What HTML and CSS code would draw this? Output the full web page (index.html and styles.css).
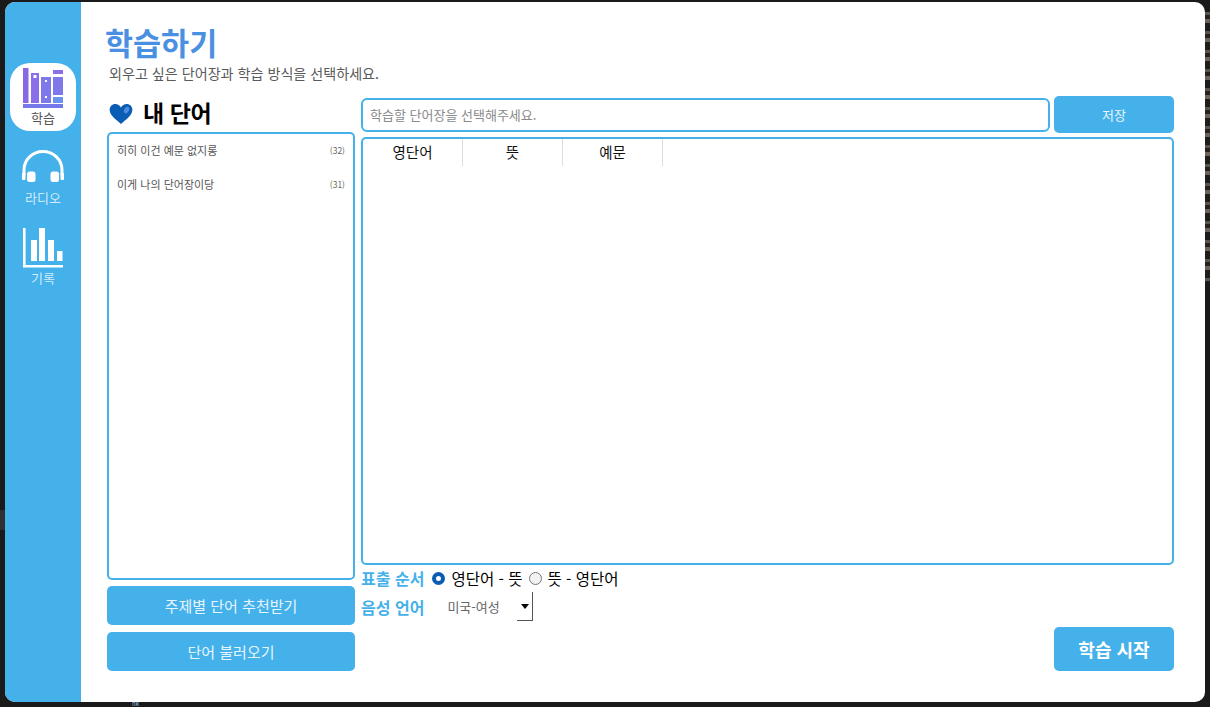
FILE: index.html
```html
<!DOCTYPE html>
<html lang="ko">
<head>
<meta charset="utf-8">
<title>학습하기</title>
<link rel="stylesheet" href="styles.css">
</head>
<body>
<div class="backdrop">
  <div class="noise-right"></div>
  <div class="band-left"></div>
  <span class="behind-text">nk</span>
</div>
<div class="window">
  <nav class="sidebar">
    <a class="nav-item active">
      <svg class="nav-icon tall" width="40" height="40" viewBox="0 0 40 40">
        <rect x="0" y="0" width="5.500" height="35" fill="#8a68e4"/>
        <path fill-rule="evenodd" fill="#8a6eea" d="M8 5h8v30H8zM10.500 7v3h3V7z"/>
        <path fill-rule="evenodd" fill="#7f78ea" d="M18 9h10v26H18zM22 12v2h2v-2zM22 28v2h2v-2z"/>
        <rect x="30" y="2" width="10" height="4" fill="#8a6eea"/>
        <rect x="30" y="9" width="10" height="18" fill="#7f78ea"/>
        <rect x="30" y="29" width="10" height="6" fill="#6c92ee"/>
        <rect x="0" y="36" width="40" height="4" fill="#7478e8"/>
      </svg>
      <span>학습</span>
    </a>
    <a class="nav-item">
      <svg class="nav-icon short" width="42" height="32" viewBox="0 0 42 32">
        <path d="M2 25V20a19 18.500 0 0 1 38 0v5" fill="none" stroke="#fff" stroke-width="3"/>
        <rect x="5" y="21.500" width="8.500" height="10.500" rx="2.500" fill="#fff"/>
        <rect x="28.500" y="21.500" width="8.500" height="10.500" rx="2.500" fill="#fff"/>
        <rect x="0" y="23" width="3.500" height="7" rx="1" fill="#fff"/>
        <rect x="38.500" y="23" width="3.500" height="7" rx="1" fill="#fff"/>
      </svg>
      <span>라디오</span>
    </a>
    <a class="nav-item">
      <svg class="nav-icon tall" width="40" height="40" viewBox="0 0 40 40">
        <path d="M1.300 0v38.200H40" fill="none" stroke="#fff" stroke-width="2.600"/>
        <rect x="8" y="12" width="6" height="21" fill="#fff"/>
        <rect x="16" y="0" width="6" height="33" fill="#fff"/>
        <rect x="25" y="12" width="6" height="21" fill="#fff"/>
        <rect x="34" y="23" width="5.500" height="10" fill="#fff"/>
      </svg>
      <span>기록</span>
    </a>
  </nav>
  <main class="main">
    <header class="page-head">
      <h1>학습하기</h1>
      <p>외우고 싶은 단어장과 학습 방식을 선택하세요.</p>
    </header>
    <div class="columns">
      <section class="left">
        <h2 class="my-title">
          <svg width="24" height="20" viewBox="0.800 0.800 22.400 19.700">
            <path d="M12 20.500C7 16 .8 12 .8 6.500 .8 3 3.400 .8 6.300 .8c2.500 0 4.500 1.200 5.700 3.400C13.200 2 15.200 .8 17.700 .8c2.900 0 5.500 2.200 5.500 5.700C23.200 12 17 16 12 20.500z" fill="#0b5cb4"/>
            <ellipse cx="17.500" cy="6.800" rx="2.300" ry="3.500" transform="rotate(25 17.500 6.800)" fill="#4f8ce0"/>
          </svg>
          <span>내 단어</span>
        </h2>
        <ul class="list">
          <li><span>히히 이건 예문 없지롱</span><small>(32)</small></li>
          <li><span>이게 나의 단어장이당</span><small>(31)</small></li>
        </ul>
        <button class="btn wide">주제별 단어 추천받기</button>
        <button class="btn wide">단어 불러오기</button>
      </section>
      <section class="right">
        <div class="save-row">
          <input class="name-input" placeholder="학습할 단어장을 선택해주세요.">
          <button class="btn save">저장</button>
        </div>
        <div class="table-box">
          <div class="thead"><div>영단어</div><div>뜻</div><div>예문</div></div>
        </div>
        <div class="option-row">
          <strong>표출 순서</strong>
          <span class="radio on"></span><span class="opt">영단어 - 뜻</span>
          <span class="radio"></span><span class="opt">뜻 - 영단어</span>
        </div>
        <div class="option-row voice">
          <strong>음성 언어</strong>
          <div class="select"><span>미국-여성</span><i class="caret"></i></div>
        </div>
        <div class="start-row"><button class="btn start">학습 시작</button></div>
      </section>
    </div>
  </main>
</div>
</body>
</html>
```
FILE: styles.css
```css
* { box-sizing: border-box; }
html, body { margin: 0; height: 100%; }
body {
  background: #1a1a1a;
  font-family: "Noto Sans CJK KR", "Noto Sans", sans-serif;
  overflow: hidden;
}
.backdrop { position: absolute; inset: 0; overflow: hidden; }
.noise-right {
  position: absolute;
  left: 1205px;
  top: 12px;
  width: 5px;
  height: 270px;
  background: repeating-linear-gradient(180deg, #5a544e 0 3px, #26231f 3px 7px, #6b6259 7px 11px, #1f1d1b 11px 19px);
}
.band-left {
  position: absolute;
  left: 0;
  top: 510px;
  width: 5px;
  height: 20px;
  background: #303030;
}
.behind-text {
  position: absolute;
  left: 132px;
  top: 701px;
  font-size: 6px;
  line-height: 5px;
  color: #a9c4ea;
}
.window {
  position: relative;
  width: 1200px;
  height: 700px;
  margin: 2px 5px;
  display: flex;
  background: #fff;
  border-radius: 10px;
  overflow: hidden;
}
.sidebar {
  width: 76px;
  flex: none;
  background: #45b1ea;
  padding: 61px 5px 0;
  display: flex;
  flex-direction: column;
  align-items: center;
  gap: 14px;
}
.nav-item {
  width: 66px;
  height: 68px;
  border-radius: 20px;
  display: flex;
  flex-direction: column;
  align-items: center;
  padding-top: 5px;
  color: #cfeafa;
  font-size: 13px;
  line-height: 16px;
}
.nav-item:nth-child(2) { height: 64px; }
.nav-item.active { background: #fff; color: #555; }
.nav-icon { display: block; flex: none; }
.nav-icon.tall { margin-bottom: 2px; }
.nav-icon.short { margin-bottom: 8px; }
.main { flex: 1; padding: 19px 31px 0 24px; min-width: 0; }
.page-head h1 {
  margin: 0;
  font-size: 30.500px;
  line-height: 42px;
  font-weight: 700;
  color: #4a90e2;
}
.page-head p {
  margin: 0 0 0 4px;
  font-size: 14.100px;
  line-height: 20px;
  color: #5a5a5a;
}
.columns { display: flex; gap: 6px; margin-top: 13px; padding-left: 2px; }
.left { width: 248px; flex: none; display: flex; flex-direction: column; }
.my-title {
  margin: 0;
  height: 36px;
  display: flex;
  align-items: center;
  gap: 9px;
  padding: 0 0 5px 2px;
  font-size: 23px;
  letter-spacing: -0.400px;
  font-weight: 700;
  color: #000;
}
.my-title svg { position: relative; top: 2px; }
.my-title span { margin-left: 1px; }
.list {
  list-style: none;
  margin: 0 0 6px;
  padding: 0;
  height: 448px;
  border: 2px solid #45b1ea;
  border-radius: 5px;
}
.list li {
  height: 34px;
  display: flex;
  justify-content: space-between;
  align-items: center;
  padding: 0 8px 2px 8px;
  font-size: 11px;
  color: #555;
}
.list small { font-size: 8.500px; color: #666; }
.btn {
  border: 0;
  background: #45b1ea;
  color: #e6f5fd;
  border-radius: 5px;
  font-family: inherit;
  padding: 0;
}
.wide { height: 39px; font-size: 15px; }
.wide + .wide { margin-top: 7px; }
.right { flex: 1; min-width: 0; }
.save-row { display: flex; gap: 4px; height: 37px; align-items: center; }
.name-input {
  flex: 1;
  min-width: 0;
  height: 34px;
  border: 2px solid #45b1ea;
  border-radius: 6px;
  padding: 0 7px;
  font-family: inherit;
  font-size: 13px;
  outline: 0;
}
.name-input::placeholder { color: #8a8a8a; }
.save { width: 120px; height: 37px; font-size: 13px; flex: none; }
.table-box {
  margin-top: 4px;
  height: 428px;
  border: 2px solid #45b1ea;
  border-radius: 5px;
}
.thead { display: flex; height: 27px; }
.thead div {
  width: 100px;
  border-right: 1px solid #ddd;
  text-align: center;
  font-size: 14.500px;
  line-height: 26px;
  color: #111;
}
.option-row {
  display: flex;
  align-items: center;
  height: 28px;
  color: #000;
  font-size: 15.500px;
  padding-bottom: 2px;
}
.option-row strong { color: #45b1ea; font-size: 16px; font-weight: 700; margin-right: 8px; }
.radio {
  width: 13px;
  height: 13px;
  border-radius: 50%;
  border: 1px solid #767676;
  background: #f2f2f2;
  margin-right: 6px;
  flex: none;
}
.radio.on { border: 4px solid #0b5cb4; background: #fff; }
.opt { margin-right: 6px; }
.voice { height: 30px; padding-bottom: 3px; }
.select {
  width: 92px;
  height: 29px;
  margin-left: 9px;
  display: flex;
  align-items: center;
  justify-content: space-between;
  font-size: 13px;
  color: #666;
}
.select span { margin-left: 6px; }
.caret {
  width: 16px;
  height: 29px;
  border-right: 1px solid #555;
  border-bottom: 1px solid #555;
  position: relative;
}
.caret::after {
  content: "";
  position: absolute;
  left: 4px;
  top: 12px;
  border: 4px solid transparent;
  border-top: 5px solid #000;
  border-bottom: 0;
}
.start-row { display: flex; justify-content: flex-end; margin-top: 4px; }
.start { width: 120px; height: 44px; font-size: 18px; font-weight: 700; color: #fff; }
```
